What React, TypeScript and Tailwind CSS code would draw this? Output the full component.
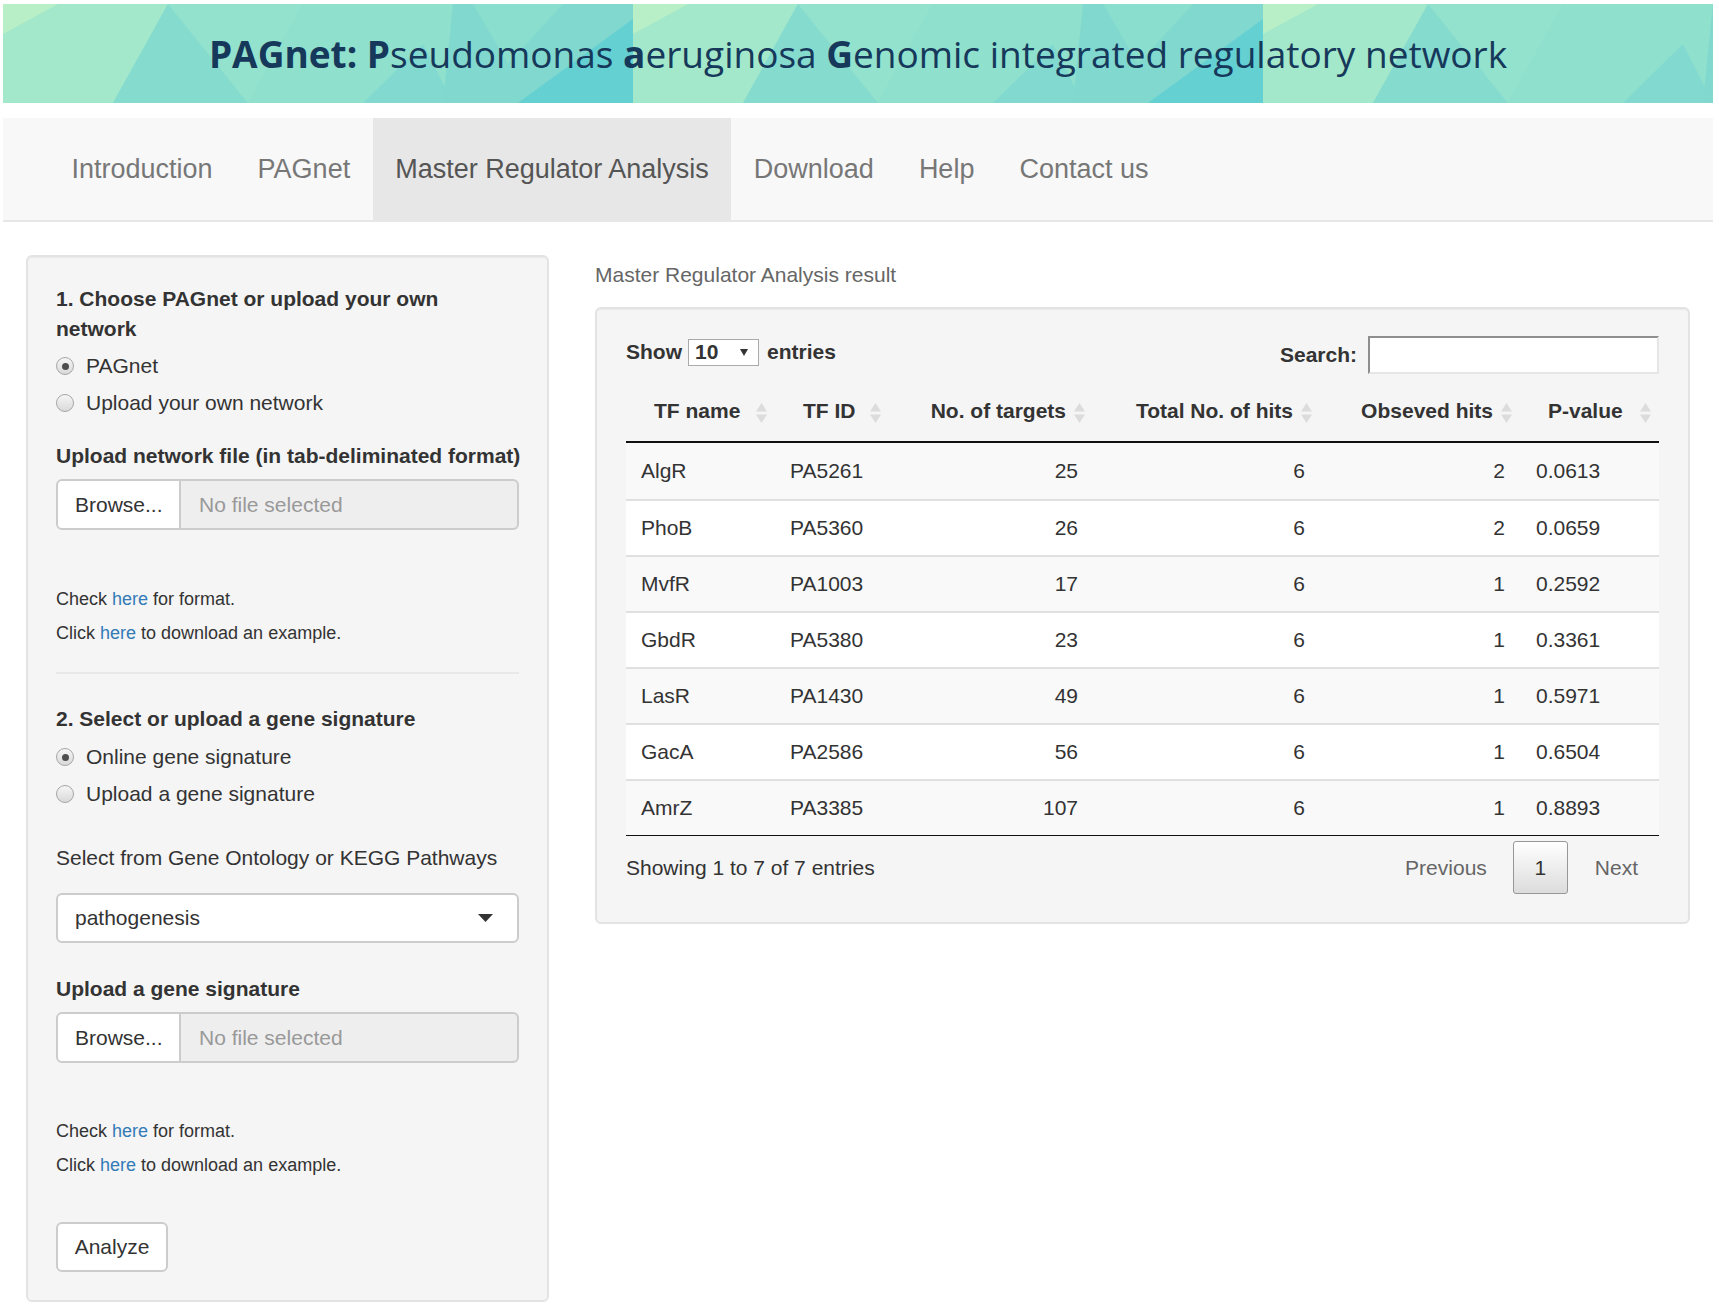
import React from "react";

const tabs = ["Introduction", "PAGnet", "Master Regulator Analysis", "Download", "Help", "Contact us"];

const rows = [
  ["AlgR", "PA5261", "25", "6", "2", "0.0613"],
  ["PhoB", "PA5360", "26", "6", "2", "0.0659"],
  ["MvfR", "PA1003", "17", "6", "1", "0.2592"],
  ["GbdR", "PA5380", "23", "6", "1", "0.3361"],
  ["LasR", "PA1430", "49", "6", "1", "0.5971"],
  ["GacA", "PA2586", "56", "6", "1", "0.6504"],
  ["AmrZ", "PA3385", "107", "6", "1", "0.8893"],
];

const headers: [string, boolean][] = [
  ["TF name", false],
  ["TF ID", false],
  ["No. of targets", true],
  ["Total No. of hits", true],
  ["Obseved hits", true],
  ["P-value", false],
];

function BannerTile({ x }: { x: number }) {
  return (
    <g transform={`translate(${x},0)`}>
      <rect x="0" y="0" width="630" height="99" fill="#8ddfcd" />
      <polygon points="0,0 165,0 110,99 0,99" fill="#a3e8ca" />
      <polygon points="0,0 55,0 0,30" fill="#b9efc7" />
      <polygon points="165,0 110,99 245,99" fill="#86dbcf" />
      <polygon points="165,0 300,0 245,99" fill="#93e2cd" />
      <polygon points="300,0 450,0 440,99 245,99" fill="#8fe0cd" />
      <polygon points="360,99 420,40 450,99" fill="#82d9cf" />
      <polygon points="450,0 630,0 630,99 440,99" fill="#80d8cf" />
      <polygon points="470,0 560,0 505,60" fill="#8adecd" />
      <polygon points="630,15 630,99 515,99" fill="#64d0d2" />
    </g>
  );
}

function SortIcon() {
  return (
    <svg width="11" height="20" viewBox="0 0 11 20" className="absolute right-[8px] top-[22px]">
      <polygon points="0,8.5 5.5,0 11,8.5" fill="#dcdcdc" />
      <polygon points="0,11.5 11,11.5 5.5,20" fill="#dcdcdc" />
    </svg>
  );
}

function Radio({ checked, label }: { checked?: boolean; label: string }) {
  return (
    <div className="flex h-[30px] items-center">
      <span className="flex h-[18px] w-[18px] items-center justify-center rounded-full border border-[#a6a6a6] bg-gradient-to-b from-[#f6f6f6] to-[#d9d9d9]">
        {checked && <span className="h-[7px] w-[7px] rounded-full bg-[#4d4d4d]" />}
      </span>
      <span className="ml-[12px]">{label}</span>
    </div>
  );
}

function FileInput() {
  return (
    <div className="flex h-[51px]">
      <div className="flex w-[125px] items-center rounded-l-[6px] border-2 border-[#cccccc] bg-white pl-[17px]">Browse...</div>
      <div className="flex flex-1 items-center rounded-r-[6px] border-2 border-l-0 border-[#cccccc] bg-[#eeeeee] pl-[18px] text-[#999999]">
        No file selected
      </div>
    </div>
  );
}

function HelpLinks() {
  return (
    <div className="text-[18px] leading-[26px]">
      <div>
        Check <span className="text-[#337ab7]">here</span> for format.
      </div>
      <div className="mt-[8px]">
        Click <span className="text-[#337ab7]">here</span> to download an example.
      </div>
    </div>
  );
}

export default function App() {
  return (
    <div className="min-h-[1314px] bg-white pl-[3px] pr-[6px] pt-[4px] font-['Liberation_Sans',Arial,sans-serif] text-[21px] leading-[30px] text-[#333333]">
      {/* banner */}
      <div className="relative flex h-[99px] items-center justify-center overflow-hidden">
        <svg className="absolute inset-0 h-full w-full" viewBox="0 0 1710 99" preserveAspectRatio="none">
          <BannerTile x={0} />
          <BannerTile x={630} />
          <BannerTile x={1260} />
        </svg>
        <h1 className="relative font-['Open_Sans','Noto_Sans',sans-serif] text-[37px] leading-[50px] text-[#16385a]">
          <span className="font-bold">PAGnet: P</span>seudomonas <span className="font-bold">a</span>eruginosa{" "}
          <span className="font-bold">G</span>enomic integrated regulatory network
        </h1>
      </div>

      {/* nav */}
      <nav className="mt-[15px] flex h-[104px] border-b-2 border-[#e7e7e7] bg-[#f8f8f8] pl-[46px]">
        {tabs.map((t) => (
          <div
            key={t}
            className={
              t === "Master Regulator Analysis"
                ? "flex items-center bg-[#e7e7e7] px-[22.5px] text-[27px] text-[#555555]"
                : "flex items-center px-[22.5px] text-[27px] text-[#777777]"
            }
          >
            {t}
          </div>
        ))}
      </nav>

      <div className="flex px-[23px] pt-[33px]">
        {/* sidebar */}
        <div className="w-[523px] shrink-0 rounded-[6px] border-2 border-[#e3e3e3] bg-[#f5f5f5] px-[28px] pb-[28px] pt-[27px] shadow-[inset_0_1px_1px_rgba(0,0,0,0.05)]">
          <div className="font-bold">1. Choose PAGnet or upload your own network</div>
          <div className="mt-[7px]">
            <Radio checked label="PAGnet" />
          </div>
          <div className="mt-[7px]">
            <Radio label="Upload your own network" />
          </div>
          <div className="mt-[23px] whitespace-nowrap font-bold">Upload network file (in tab-deliminated format)</div>
          <div className="mt-[8px]">
            <FileInput />
          </div>
          <div className="mt-[56px]">
            <HelpLinks />
          </div>
          <div className="mt-[26px] h-[2px] bg-[#e8e8e8]" />
          <div className="mt-[30px] font-bold">2. Select or upload a gene signature</div>
          <div className="mt-[8px]">
            <Radio checked label="Online gene signature" />
          </div>
          <div className="mt-[7px]">
            <Radio label="Upload a gene signature" />
          </div>
          <div className="mt-[34px]">Select from Gene Ontology or KEGG Pathways</div>
          <div className="mt-[20px] flex h-[50px] items-center justify-between rounded-[6px] border-2 border-[#cccccc] bg-white pl-[17px] pr-[24px]">
            <span>pathogenesis</span>
            <svg width="15" height="8" viewBox="0 0 15 8">
              <polygon points="0,0 15,0 7.5,8" fill="#333333" />
            </svg>
          </div>
          <div className="mt-[31px] font-bold">Upload a gene signature</div>
          <div className="mt-[8px]">
            <FileInput />
          </div>
          <div className="mt-[55px]">
            <HelpLinks />
          </div>
          <div className="mt-[44px] flex h-[50px] w-[112px] items-center justify-center rounded-[6px] border-2 border-[#cccccc] bg-white">
            Analyze
          </div>
        </div>

        {/* main */}
        <div className="ml-[46px] flex-1">
          <div className="mt-[5px] text-[#666666]">Master Regulator Analysis result</div>
          <div className="mt-[17px] rounded-[6px] border-2 border-[#e3e3e3] bg-[#f5f5f5] px-[29px] pb-[28px] pt-[28px] shadow-[inset_0_1px_1px_rgba(0,0,0,0.05)]">
            <div className="flex items-start justify-between">
              <div className="mt-[1px] flex h-[28px] items-center font-bold">
                <span>Show</span>
                <div className="ml-[6px] flex h-[27px] w-[71px] items-center justify-between border border-[#aaaaaa] bg-white pl-[6px] pr-[10px]">
                  <span>10</span>
                  <svg width="8" height="8" viewBox="0 0 8 8">
                    <polygon points="0,1 8,1 4,8" fill="#333333" />
                  </svg>
                </div>
                <span className="ml-[8px]">entries</span>
              </div>
              <div className="mt-[-1px] flex items-center">
                <span className="font-bold">Search:</span>
                <div className="ml-[11px] h-[38px] w-[291px] border-2 border-b-[#e6e6e6] border-l-[#8e8e8e] border-r-[#e6e6e6] border-t-[#8e8e8e] bg-white" />
              </div>
            </div>

            {/* table */}
            <div className="mt-[7px]">
              <div className="grid grid-cols-[149px_114px_204px_227px_200px_139px] border-b-2 border-[#111111]">
                {headers.map(([h, right]) => (
                  <div
                    key={h}
                    className={
                      right
                        ? "relative py-[15px] pl-[28px] pr-[27px] text-right font-bold"
                        : "relative py-[15px] pl-[28px] pr-[27px] text-left font-bold"
                    }
                  >
                    {h}
                    <SortIcon />
                  </div>
                ))}
              </div>
              {rows.map((r, i) => (
                <div
                  key={r[0]}
                  className={
                    i === 0
                      ? "grid h-[56px] grid-cols-[149px_114px_204px_227px_200px_139px] items-center bg-[#f9f9f9]"
                      : i % 2 === 0
                        ? "grid h-[56px] grid-cols-[149px_114px_204px_227px_200px_139px] items-center border-t-2 border-[#e0e0e0] bg-[#f9f9f9]"
                        : "grid h-[56px] grid-cols-[149px_114px_204px_227px_200px_139px] items-center border-t-2 border-[#e0e0e0] bg-white"
                  }
                >
                  <div className="px-[15px]">{r[0]}</div>
                  <div className="px-[15px]">{r[1]}</div>
                  <div className="px-[15px] text-right">{r[2]}</div>
                  <div className="px-[15px] text-right">{r[3]}</div>
                  <div className="px-[15px] text-right">{r[4]}</div>
                  <div className="px-[16px]">{r[5]}</div>
                </div>
              ))}
              <div className="h-px bg-[#111111]" />
            </div>

            <div className="mt-[5px] flex h-[53px] items-center justify-between">
              <span>Showing 1 to 7 of 7 entries</span>
              <div className="flex items-center">
                <span className="text-[#666666]">Previous</span>
                <div className="ml-[26px] flex h-[53px] w-[55px] items-center justify-center rounded-[3px] border border-[#979797] bg-gradient-to-b from-white to-[#dcdcdc]">
                  1
                </div>
                <span className="ml-[27px] mr-[21px] text-[#666666]">Next</span>
              </div>
            </div>
          </div>
        </div>
      </div>
    </div>
  );
}
